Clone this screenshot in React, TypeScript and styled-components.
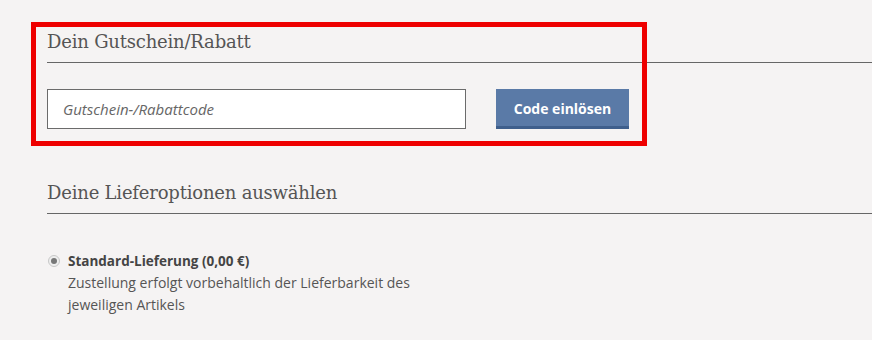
import React from "react";
import styled, { createGlobalStyle } from "styled-components";

const Global = createGlobalStyle`
  html, body { margin: 0; padding: 0; background: #f5f3f3; }
  body { font-family: "Open Sans", "Liberation Sans", sans-serif; }
`;

const Page = styled.div`
  position: relative;
  width: 872px;
  height: 340px;
  overflow: hidden;
  padding: 30px 0 0 47px;
  box-sizing: border-box;
`;

const Section = styled.section<{ $gap: number }>`
  display: flex;
  flex-direction: column;
  gap: ${(p) => p.$gap}px;
`;

const Heading = styled.h2`
  margin: 0;
  font-family: "DejaVu Serif", "Liberation Serif", serif;
  font-weight: 400;
  font-size: 18px;
  line-height: 24px;
  color: #555;
  padding-bottom: 8px;
  border-bottom: 1px solid #666;
  letter-spacing: -0.2px;
`;

const CouponRow = styled.div`
  display: flex;
  align-items: center;
  gap: 30px;
`;

const Input = styled.input`
  width: 419px;
  height: 40px;
  box-sizing: border-box;
  border: 1px solid #6b6b6b;
  background: #fff;
  padding: 0 15px;
  font-family: "Open Sans", sans-serif;
  font-size: 15px;
  outline: none;
  &::placeholder {
    color: #666;
    font-style: italic;
  }
`;

const Button = styled.button`
  width: 133px;
  height: 40px;
  box-sizing: border-box;
  border: none;
  border-bottom: 3px solid #3f5f8c;
  background: #5a7aa7;
  color: #fff;
  font-family: "Open Sans", sans-serif;
  font-weight: 700;
  font-size: 14px;
  padding: 2px 0 0;
`;

const Highlight = styled.div`
  position: absolute;
  left: 31px;
  top: 22px;
  width: 616px;
  height: 124px;
  box-sizing: border-box;
  border: 5px solid #ee0000;
  pointer-events: none;
`;

const Spacer = styled.div<{ $h: number }>`
  height: ${(p) => p.$h}px;
`;

const Option = styled.label`
  display: flex;
  gap: 8px;
  align-items: flex-start;
  color: #555;
  font-size: 14px;
  line-height: 22px;
`;

const Radio = styled.span`
  flex: none;
  width: 12px;
  height: 12px;
  margin-top: 5px;
  margin-left: 1px;
  border-radius: 50%;
  border: 1px solid #c8c8c8;
  background: #eee;
  box-sizing: border-box;
  display: flex;
  align-items: center;
  justify-content: center;
  &::after {
    content: "";
    width: 6px;
    height: 6px;
    border-radius: 50%;
    background: #777;
  }
`;

const OptionText = styled.div`
  width: 350px;
`;

const OptionTitle = styled.div`
  font-weight: 700;
  color: #444;
  font-size: 13.5px;
`;

export default function App() {
  return (
    <>
      <Global />
      <Page>
        <Section $gap={26}>
          <Heading>Dein Gutschein/Rabatt</Heading>
          <CouponRow>
            <Input placeholder="Gutschein-/Rabattcode" />
            <Button>Code einlösen</Button>
          </CouponRow>
        </Section>
        <Spacer $h={52} />
        <Section $gap={36}>
          <Heading>Deine Lieferoptionen auswählen</Heading>
          <Option>
            <Radio />
            <OptionText>
              <OptionTitle>Standard-Lieferung (0,00 €)</OptionTitle>
              Zustellung erfolgt vorbehaltlich der Lieferbarkeit des jeweiligen Artikels
            </OptionText>
          </Option>
        </Section>
        <Highlight />
      </Page>
    </>
  );
}
